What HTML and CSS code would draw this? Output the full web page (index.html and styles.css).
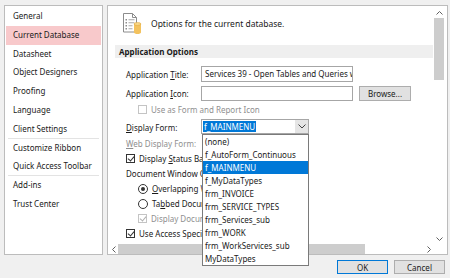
FILE: index.html
```html
<!DOCTYPE html>
<html lang="en">
  <head>
    <meta charset="UTF-8" />
    <title>Access Options</title>
    <link rel="stylesheet" href="styles.css">
  </head>
  <body>
    <div class="dialog">
      <div class="main">
        <!-- left category list -->
        <ul class="nav">
          <li>General</li>
          <li class="active">Current Database</li>
          <li>Datasheet</li>
          <li>Object Designers</li>
          <li>Proofing</li>
          <li>Language</li>
          <li class="group-end">Client Settings</li>
          <li>Customize Ribbon</li>
          <li class="group-end">Quick Access Toolbar</li>
          <li>Add-ins</li>
          <li>Trust Center</li>
        </ul>

        <div class="panel">
          <div class="panel-body">
            <div class="content">
              <div class="intro">
                <svg width="22" height="22" viewBox="0 0 22 22">
                  <path d="M2.5 1.5h9l4 4v14.5h-13z" fill="#fff" stroke="#8c8c8c" />
                  <path d="M11.5 1.5v4h4" fill="none" stroke="#8c8c8c" />
                  <rect x="4.5" y="7" width="1.5" height="1.5" fill="#8c8c8c" />
                  <rect x="4.5" y="10" width="1.5" height="1.5" fill="#8c8c8c" />
                  <rect x="4.5" y="13" width="1.5" height="1.5" fill="#8c8c8c" />
                  <rect x="4.5" y="16" width="1.5" height="1.5" fill="#8c8c8c" />
                  <path d="M7.5 7.75h6M7.5 10.75h6M7.5 13.75h4M7.5 16.75h4" stroke="#a8a8a8" stroke-width="1" />
                  <path d="M13 12v8.5c0 0.9 1.6 1.5 3.5 1.5s3.5-0.6 3.5-1.5v-8.5z" fill="#f3c25e" />
                  <ellipse cx="16.5" cy="12" rx="3.5" ry="1.4" fill="#f8d98c" stroke="#e0a63a" stroke-width="0.6" />
                </svg>
                <span>Options for the current database.</span>
              </div>

              <div class="section">Application Options</div>

              <div class="form">
                <div class="row row-title">
                  <span class="label">Application <u>T</u>itle:</span>
                  <div class="textbox wide">Services 39 - Open Tables and Queries with VBA</div>
                </div>
                <div class="row row-icon">
                  <span class="label">Application <u>I</u>con:</span>
                  <div class="textbox wide"></div>
                  <button class="btn browse">Browse...</button>
                </div>
                <div class="row indent disabled">
                  <span class="box"></span>
                  <span>Use as Form and Report Icon</span>
                </div>
                <div class="row row-form">
                  <span class="label"><u>D</u>isplay Form:</span>
                  <div class="combo">
                    <span class="combo-text"><span class="selected">f_MAINMENU</span></span>
                    <span class="combo-btn">
                      <svg width="8" height="5" viewBox="0 0 8 5"><path d="M0.5 0.5l3.5 3.5l3.5-3.5" fill="none" stroke="#444" /></svg>
                    </span>
                  </div>
                </div>
                <div class="row disabled">
                  <span class="label"><u>W</u>eb Display Form:</span>
                </div>
                <div class="row">
                  <span class="box checked"></span>
                  <span>Display <u>S</u>tatus Bar</span>
                </div>
                <div class="row">
                  <span>Document Window Options</span>
                </div>
                <div class="row indent">
                  <span class="radio on"></span>
                  <span><u>O</u>verlapping Windows</span>
                </div>
                <div class="row indent">
                  <span class="radio"></span>
                  <span>Ta<u>b</u>bed Documents</span>
                </div>
                <div class="row indent disabled">
                  <span class="box checked"></span>
                  <span>Display Document Tabs</span>
                </div>
                <div class="row">
                  <span class="box checked"></span>
                  <span>Use Access Special <u>K</u>eys</span>
                </div>
                <div class="row">
                  <span class="box"></span>
                  <span>Close on Close</span>
                </div>
              </div>
            </div>

            <div class="vscroll">
              <span class="arrow">
                <svg width="7" height="4" viewBox="0 0 7 4"><path d="M0.5 3.5l3-3l3 3" fill="none" stroke="#606060" /></svg>
              </span>
              <span class="thumb"></span>
              <span class="track"></span>
              <span class="arrow">
                <svg width="7" height="4" viewBox="0 0 7 4"><path d="M0.5 0.5l3 3l3-3" fill="none" stroke="#606060" /></svg>
              </span>
            </div>
          </div>

          <div class="hscroll">
            <span class="arrow">
              <svg width="4" height="7" viewBox="0 0 4 7"><path d="M3.5 0.5l-3 3l3 3" fill="none" stroke="#606060" /></svg>
            </span>
            <span class="hthumb"></span>
            <span class="track"></span>
            <span class="arrow">
              <svg width="4" height="7" viewBox="0 0 4 7"><path d="M0.5 0.5l3 3l-3 3" fill="none" stroke="#606060" /></svg>
            </span>
            <span class="corner"></span>
          </div>
        </div>
      </div>

      <div class="buttons">
        <button class="btn default">OK</button>
        <button class="btn">Cancel</button>
      </div>

      <!-- open drop-down of the Display Form combo -->
      <ul class="dropdown">
        <li>(none)</li>
        <li>f_AutoForm_Continuous</li>
        <li class="hot">f_MAINMENU</li>
        <li>f_MyDataTypes</li>
        <li>frm_INVOICE</li>
        <li>frm_SERVICE_TYPES</li>
        <li>frm_Services_sub</li>
        <li>frm_WORK</li>
        <li>frm_WorkServices_sub</li>
        <li>MyDataTypes</li>
      </ul>
    </div>
  </body>
</html>
```

FILE: styles.css
```css
* {
  margin: 0;
  padding: 0;
  box-sizing: border-box;
}

body {
  background-color: #f0f0f0;
  font-family: "Noto Sans", sans-serif;
  font-size: 8px;
  color: #1a1a1a;
}

u {
  text-decoration-thickness: 1px;
  text-underline-offset: 1px;
}

.dialog {
  position: relative;
  width: 450px;
  height: 278px;
  padding: 5px 2px 0 4px;
}

.main {
  display: flex;
  gap: 4px;
  height: 250px;
}

/* category list */
.nav {
  list-style: none;
  width: 99px;
  background-color: white;
  border: 1px solid #bcbcbc;
  padding: 1px;
}

.nav li {
  height: 18.8px;
  line-height: 18.8px;
  padding-left: 7px;
  white-space: nowrap;
}

.nav li.active {
  background-color: #f8c9cb;
}

.nav li.group-end {
  border-bottom: 1px solid #e3e3e3;
  margin: 0 2px;
  padding-left: 5px;
}

/* right panel */
.panel {
  width: 341px;
  background-color: white;
  border: 1px solid #bcbcbc;
  display: flex;
  flex-direction: column;
}

.panel-body {
  display: flex;
  height: 238px;
}

.content {
  flex: 1;
  overflow: hidden;
}

.intro {
  display: flex;
  align-items: center;
  gap: 8px;
  height: 39px;
  padding: 4px 0 9px 13px;
  font-size: 8.5px;
}

.section {
  margin-left: 7px;
  height: 13px;
  line-height: 13px;
  padding-left: 4px;
  background-color: #efefef;
  font-weight: bold;
}

.form {
  margin-top: 7px;
  padding-left: 18px;
  display: flex;
  flex-direction: column;
}

.row {
  display: flex;
  align-items: center;
  gap: 4px;
  height: 15px;
  white-space: nowrap;
}

.row-title {
  height: 18px;
  margin-bottom: 2px;
}

.row-icon {
  height: 17px;
}

.row-form {
  height: 17px;
  margin-top: 2px;
}

.row.indent {
  padding-left: 12px;
}

.row.disabled {
  color: #8f8f8f;
}

.label {
  width: 71px;
}

.textbox {
  height: 16px;
  border: 1px solid #a6a6a6;
  padding-left: 3px;
  line-height: 14px;
  overflow: hidden;
  white-space: nowrap;
}

.textbox.wide {
  width: 152px;
}

.row-icon .textbox {
  height: 15px;
}

.btn {
  font-family: inherit;
  font-size: 8px;
  color: #1a1a1a;
  background-color: #e1e1e1;
  border: 1px solid #adadad;
  height: 15px;
}

.browse {
  width: 52px;
  margin-left: 2px;
}

.box {
  width: 9px;
  height: 9px;
  border: 1px solid #333;
  background-color: white;
  position: relative;
}

.disabled .box {
  border-color: #c4c4c4;
}

.box.checked::after {
  content: "";
  position: absolute;
  left: 2px;
  top: 0px;
  width: 3px;
  height: 5px;
  border: solid #333;
  border-width: 0 1px 1px 0;
  transform: rotate(40deg);
}

.disabled .box.checked::after {
  border-color: #b0b0b0;
}

.radio {
  width: 10px;
  height: 10px;
  border: 1px solid #333;
  border-radius: 50%;
  display: flex;
  align-items: center;
  justify-content: center;
}

.radio.on::after {
  content: "";
  width: 4px;
  height: 4px;
  border-radius: 50%;
  background-color: #333;
}

.combo {
  width: 108px;
  height: 15px;
  border: 1px solid #a6a6a6;
  display: flex;
  align-self: flex-start;
}

.combo-text {
  flex: 1;
  padding-left: 1px;
  line-height: 13px;
}

.selected {
  background-color: #0078d7;
  color: white;
  padding: 0 1px;
}

.combo-btn {
  width: 13px;
  background-color: #e5e5e5;
  display: flex;
  align-items: center;
  justify-content: center;
}

/* scroll bars */
.vscroll {
  width: 14px;
  display: flex;
  flex-direction: column;
  padding: 2px 3px 0 1px;
}

.vscroll .arrow {
  height: 10px;
  display: flex;
  align-items: center;
  justify-content: center;
}

.vscroll .thumb {
  height: 62px;
  background-color: #cdcdcd;
}

.vscroll .track {
  flex: 1;
}

.hscroll {
  height: 10px;
  display: flex;
  align-items: stretch;
  padding-left: 1px;
}

.hscroll .arrow {
  width: 9px;
  display: flex;
  align-items: center;
  justify-content: center;
}

.hthumb {
  width: 247px;
  background-color: #cdcdcd;
}

.hscroll .track {
  flex: 1;
}

.corner {
  width: 14px;
}

/* bottom buttons */
.buttons {
  display: flex;
  justify-content: flex-end;
  gap: 6px;
  margin-top: 5px;
  padding-right: 3px;
}

.buttons .btn {
  width: 51px;
  height: 14px;
}

.buttons .btn.default {
  border-color: #0078d7;
}

/* open combo list, drawn over the form */
.dropdown {
  position: absolute;
  top: 134px;
  left: 202px;
  width: 107px;
  list-style: none;
  background-color: white;
  border: 1px solid #7a7a7a;
}

.dropdown li {
  height: 13px;
  line-height: 13px;
  padding-left: 2px;
  white-space: nowrap;
}

.dropdown li.hot {
  background-color: #0078d7;
  color: white;
}
```
